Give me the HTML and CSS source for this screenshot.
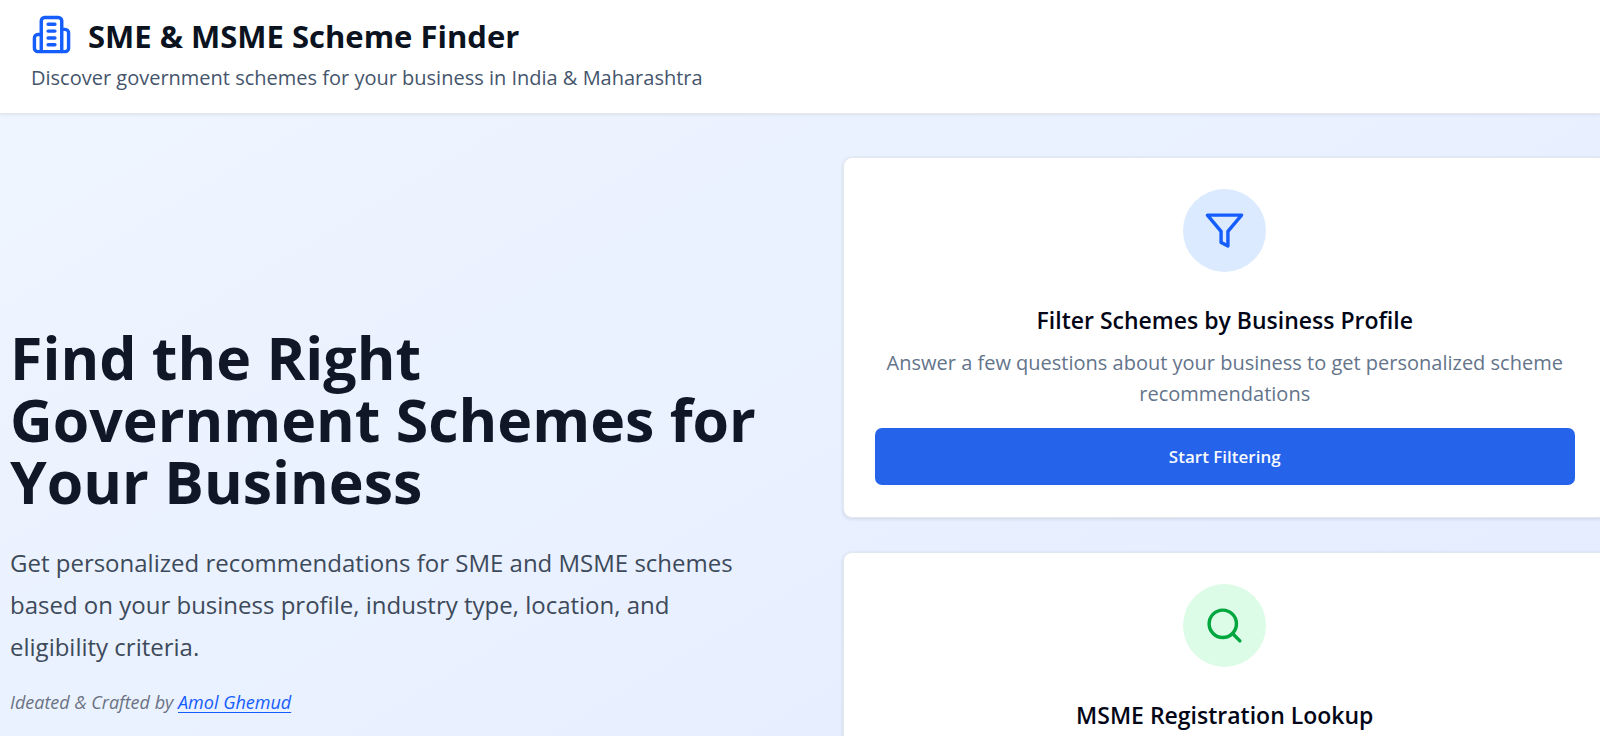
FILE: index.html
```html
<!DOCTYPE html>
<html lang="en">
<head>
<meta charset="utf-8">
<meta name="viewport" content="width=device-width, initial-scale=1">
<title>SME &amp; MSME Scheme Finder</title>
<link rel="stylesheet" href="styles.css">
</head>
<body>
<header class="site-header">
  <div class="brand">
    <svg class="brand-icon" viewBox="0 0 24 24" aria-hidden="true">
      <path d="M6 22V4a2 2 0 0 1 2-2h8a2 2 0 0 1 2 2v18Z"/>
      <path d="M6 12H4a2 2 0 0 0-2 2v6a2 2 0 0 0 2 2h2"/>
      <path d="M18 9h2a2 2 0 0 1 2 2v9a2 2 0 0 1-2 2h-2"/>
      <path d="M10 6h4M10 10h4M10 14h4M10 18h4"/>
    </svg>
    <h1 class="brand-name">SME &amp; MSME Scheme Finder</h1>
  </div>
  <p class="tagline">Discover government schemes for your business in India &amp; Maharashtra</p>
</header>
<main class="hero">
  <section class="intro">
    <h2 class="headline">Find the Right Government Schemes for Your Business</h2>
    <p class="lead">Get personalized recommendations for SME and MSME schemes based on your business profile, industry type, location, and eligibility criteria.</p>
    <p class="credit">Ideated &amp; Crafted by <a class="credit-link" href="#">Amol Ghemud</a></p>
  </section>
  <section class="cards">
    <article class="card">
      <span class="badge badge-blue">
        <svg class="badge-icon" viewBox="0 0 24 24" aria-hidden="true"><path d="M22 3H2l8 9.46V19l4 2v-8.54L22 3z"/></svg>
      </span>
      <h3 class="card-title">Filter Schemes by Business Profile</h3>
      <p class="card-text">Answer a few questions about your business to get personalized scheme recommendations</p>
      <button class="card-button" type="button">Start Filtering</button>
    </article>
    <article class="card">
      <span class="badge badge-green">
        <svg class="badge-icon" viewBox="0 0 24 24" aria-hidden="true"><circle cx="11" cy="11" r="8"/><path d="m21 21-4.3-4.3"/></svg>
      </span>
      <h3 class="card-title">MSME Registration Lookup</h3>
    </article>
  </section>
</main>
</body>
</html>
```
FILE: styles.css
```css
* {
  box-sizing: border-box;
}

html {
  overflow: hidden;
}

body {
  margin: 0;
  min-height: 100vh;
  overflow: hidden;
  font-family: "Open Sans", "Noto Sans", sans-serif;
  background: linear-gradient(to bottom right, #eff6ff, #e0e7ff 125%);
}

h1, h2, h3, p {
  margin: 0;
}

.site-header {
  position: relative;
  padding: 14px 31px 19px;
  background: #fff;
  border-bottom: 1px solid #e5e7eb;
  box-shadow: 0 1px 3px rgba(15, 23, 42, 0.08);
}

.brand {
  display: flex;
  align-items: flex-start;
  gap: 16px;
}

.brand-icon {
  width: 41px;
  height: 41px;
  fill: none;
  stroke: #155dfc;
  stroke-width: 2;
  stroke-linecap: round;
  stroke-linejoin: round;
}

.brand-name {
  font-size: 31px;
  line-height: 45px;
  font-weight: 700;
  color: #0b1220;
}

.tagline {
  margin-top: 3px;
  font-size: 20px;
  line-height: 32px;
  color: #45556c;
}

.hero {
  display: grid;
  grid-template-columns: 1fr 1fr;
  gap: 68px;
  align-items: center;
  padding: 43px 0 43px 10px;
  margin-right: -7px;
}

.intro {
  padding-bottom: 28px;
}

.headline {
  font-size: 59px;
  line-height: 62px;
  font-weight: 700;
  color: #101828;
}

.lead {
  max-width: 750px;
  margin-top: 30px;
  font-size: 24px;
  line-height: 42px;
  color: #3d4a5a;
}

.credit {
  margin-top: 20px;
  font-size: 18px;
  line-height: 28px;
  font-style: italic;
  color: #6a7282;
}

.credit-link {
  color: #155dfc;
  text-underline-offset: 3px;
}

.cards {
  display: grid;
  grid-auto-rows: 1fr;
  gap: 34px;
}

.card {
  display: flex;
  flex-direction: column;
  align-items: center;
  padding: 31px 31px 32px;
  text-align: center;
  background: #fff;
  border: 1px solid #e2e8f0;
  border-radius: 9px;
  box-shadow: 0 1px 3px 1px rgba(15, 23, 42, 0.08);
}

.badge {
  display: grid;
  place-items: center;
  width: 83px;
  height: 83px;
  border-radius: 50%;
}

.badge-blue {
  color: #155dfc;
  background: #dbeafe;
}

.badge-green {
  color: #00a63e;
  background: #dcfce7;
}

.badge-icon {
  width: 41px;
  height: 41px;
  fill: none;
  stroke: currentColor;
  stroke-width: 2;
  stroke-linecap: round;
  stroke-linejoin: round;
}

.card-title {
  margin-top: 30px;
  font-size: 23px;
  line-height: 36px;
  font-weight: 600;
  color: #020617;
}

.card-text {
  margin-top: 9px;
  font-size: 20px;
  line-height: 31px;
  color: #64748b;
}

.card-button {
  align-self: stretch;
  height: 57px;
  margin-top: 19px;
  border: 0;
  border-radius: 7px;
  background: #2563eb;
  color: #f8fafc;
  font: 600 17px "Open Sans", "Noto Sans", sans-serif;
}
```
